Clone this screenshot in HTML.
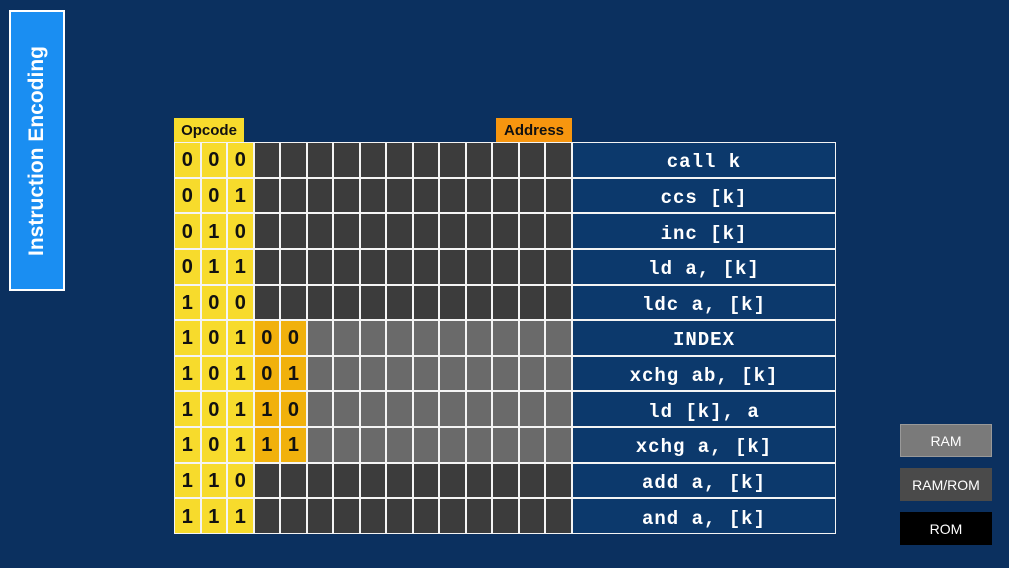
<!DOCTYPE html>
<html><head><meta charset="utf-8"><style>
*{margin:0;padding:0;box-sizing:border-box}
body{width:1009px;height:568px;background:#0b305f;position:relative;overflow:hidden;font-family:"Liberation Sans",sans-serif}
.title{position:absolute;left:9px;top:10px;width:56px;height:281px;background:#1a8ef2;border:2px solid #fff}
.title span{position:absolute;left:50%;top:50%;transform:translate(-50%,-50%) rotate(-90deg);white-space:nowrap;color:#fff;font-weight:bold;font-size:21px}
.lbl{position:absolute;top:118px;height:25px;font-weight:bold;font-size:15px;color:#111;display:flex;align-items:center;justify-content:center}
.grid{position:absolute;left:174px;top:142px;width:662px;height:392px;background:#f4f4f4;padding:1px;display:grid;grid-template-columns:repeat(15,1fr) 262px;grid-template-rows:repeat(11,1fr);gap:2px}
.grid div{display:flex;align-items:center;justify-content:center;font-weight:bold;font-size:20px;color:#111;padding-top:2px}
.y{background:#f7db2c}.o{background:#f1b10c}.d{background:#3c3c3c}.g{background:#6a6a6a}
.grid .t{background:#0c396c;color:#fff;font-family:"Liberation Mono",monospace;font-size:19px;letter-spacing:1px;padding-top:5px}
.btn{position:absolute;left:900px;width:92px;height:33px;color:#fff;font-size:14px;display:flex;align-items:center;justify-content:center}
</style></head><body>
<div class="title"><span>Instruction Encoding</span></div>
<div class="lbl" style="left:174px;width:70px;background:#f7db2c">Opcode</div>
<div class="lbl" style="left:496px;width:76px;background:#f7960f">Address</div>
<div class="grid">
<div class="y">0</div><div class="y">0</div><div class="y">0</div><div class="d"></div><div class="d"></div><div class="d"></div><div class="d"></div><div class="d"></div><div class="d"></div><div class="d"></div><div class="d"></div><div class="d"></div><div class="d"></div><div class="d"></div><div class="d"></div><div class="t">call k</div>
<div class="y">0</div><div class="y">0</div><div class="y">1</div><div class="d"></div><div class="d"></div><div class="d"></div><div class="d"></div><div class="d"></div><div class="d"></div><div class="d"></div><div class="d"></div><div class="d"></div><div class="d"></div><div class="d"></div><div class="d"></div><div class="t">ccs [k]</div>
<div class="y">0</div><div class="y">1</div><div class="y">0</div><div class="d"></div><div class="d"></div><div class="d"></div><div class="d"></div><div class="d"></div><div class="d"></div><div class="d"></div><div class="d"></div><div class="d"></div><div class="d"></div><div class="d"></div><div class="d"></div><div class="t">inc [k]</div>
<div class="y">0</div><div class="y">1</div><div class="y">1</div><div class="d"></div><div class="d"></div><div class="d"></div><div class="d"></div><div class="d"></div><div class="d"></div><div class="d"></div><div class="d"></div><div class="d"></div><div class="d"></div><div class="d"></div><div class="d"></div><div class="t">ld a, [k]</div>
<div class="y">1</div><div class="y">0</div><div class="y">0</div><div class="d"></div><div class="d"></div><div class="d"></div><div class="d"></div><div class="d"></div><div class="d"></div><div class="d"></div><div class="d"></div><div class="d"></div><div class="d"></div><div class="d"></div><div class="d"></div><div class="t">ldc a, [k]</div>
<div class="y">1</div><div class="y">0</div><div class="y">1</div><div class="o">0</div><div class="o">0</div><div class="g"></div><div class="g"></div><div class="g"></div><div class="g"></div><div class="g"></div><div class="g"></div><div class="g"></div><div class="g"></div><div class="g"></div><div class="g"></div><div class="t">INDEX</div>
<div class="y">1</div><div class="y">0</div><div class="y">1</div><div class="o">0</div><div class="o">1</div><div class="g"></div><div class="g"></div><div class="g"></div><div class="g"></div><div class="g"></div><div class="g"></div><div class="g"></div><div class="g"></div><div class="g"></div><div class="g"></div><div class="t">xchg ab, [k]</div>
<div class="y">1</div><div class="y">0</div><div class="y">1</div><div class="o">1</div><div class="o">0</div><div class="g"></div><div class="g"></div><div class="g"></div><div class="g"></div><div class="g"></div><div class="g"></div><div class="g"></div><div class="g"></div><div class="g"></div><div class="g"></div><div class="t">ld [k], a</div>
<div class="y">1</div><div class="y">0</div><div class="y">1</div><div class="o">1</div><div class="o">1</div><div class="g"></div><div class="g"></div><div class="g"></div><div class="g"></div><div class="g"></div><div class="g"></div><div class="g"></div><div class="g"></div><div class="g"></div><div class="g"></div><div class="t">xchg a, [k]</div>
<div class="y">1</div><div class="y">1</div><div class="y">0</div><div class="d"></div><div class="d"></div><div class="d"></div><div class="d"></div><div class="d"></div><div class="d"></div><div class="d"></div><div class="d"></div><div class="d"></div><div class="d"></div><div class="d"></div><div class="d"></div><div class="t">add a, [k]</div>
<div class="y">1</div><div class="y">1</div><div class="y">1</div><div class="d"></div><div class="d"></div><div class="d"></div><div class="d"></div><div class="d"></div><div class="d"></div><div class="d"></div><div class="d"></div><div class="d"></div><div class="d"></div><div class="d"></div><div class="d"></div><div class="t">and a, [k]</div>
</div>
<div class="btn" style="top:424px;background:#7a7a7a;border:1px solid #999">RAM</div>
<div class="btn" style="top:468px;background:#4a4a4a">RAM/ROM</div>
<div class="btn" style="top:512px;background:#000">ROM</div>
</body></html>
